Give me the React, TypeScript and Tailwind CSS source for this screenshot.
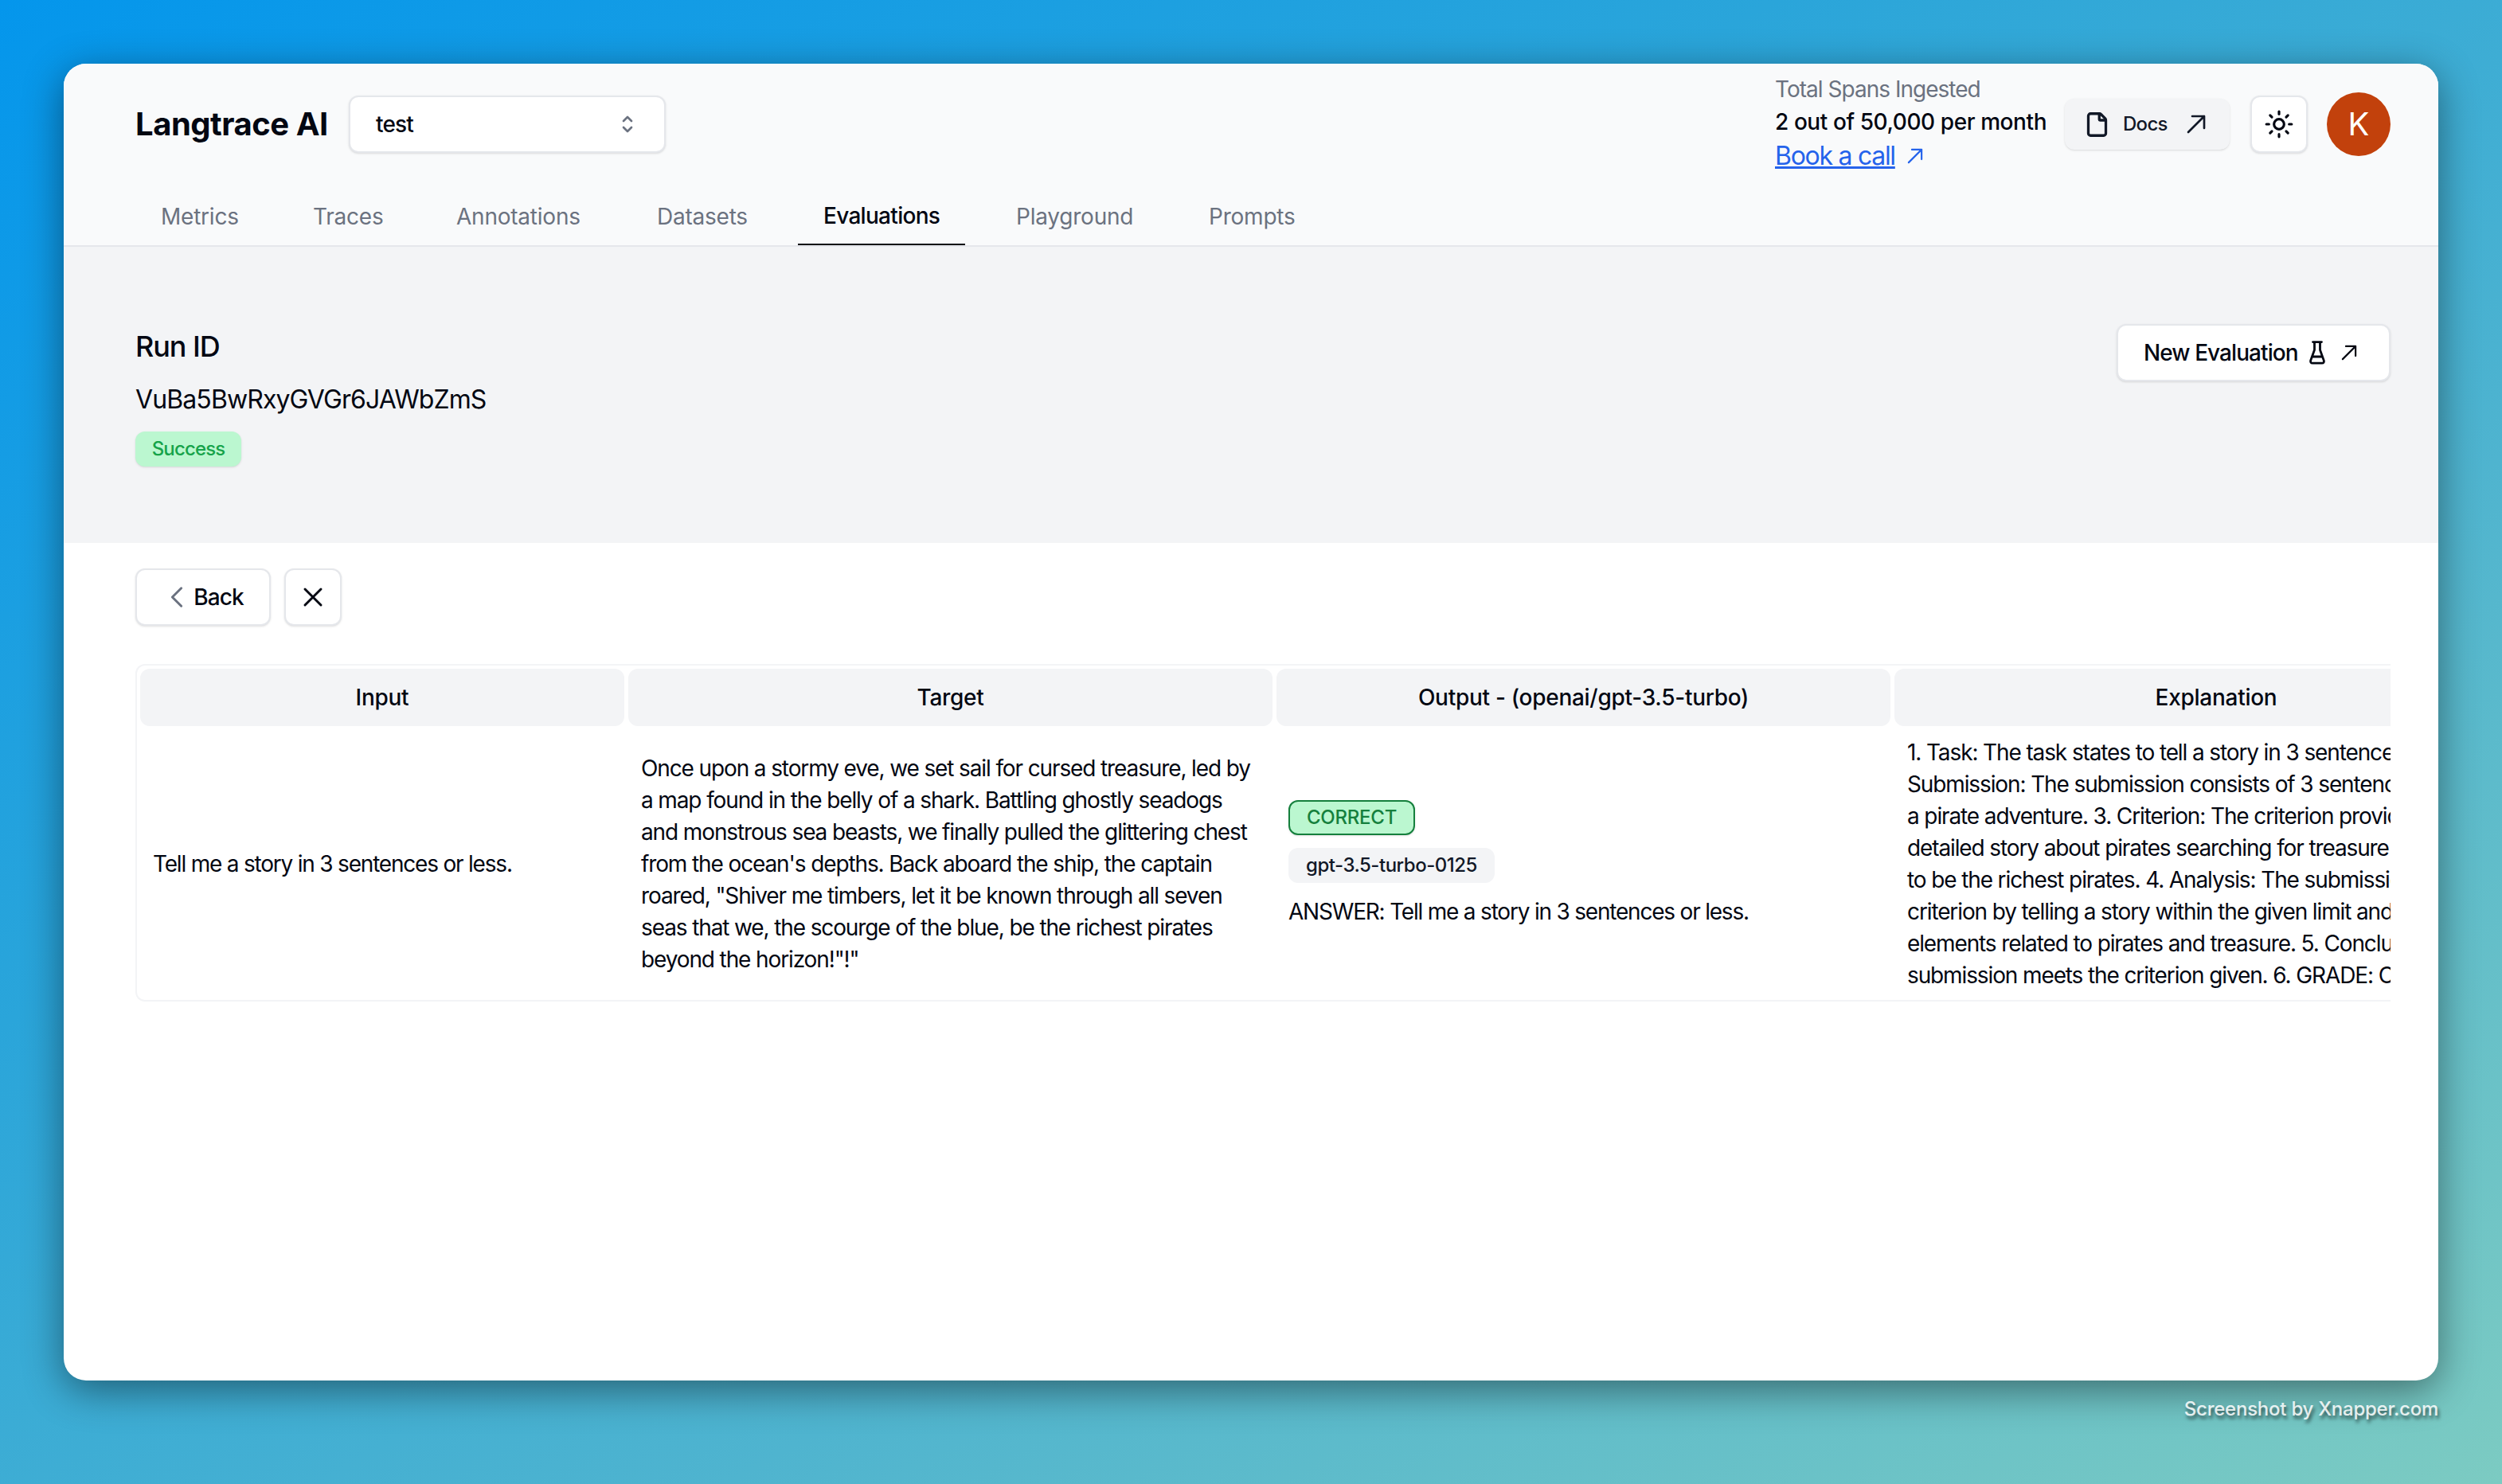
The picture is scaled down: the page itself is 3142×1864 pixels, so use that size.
import { File, Sun } from "lucide-react";

const tabs = [
  { label: "Metrics", w: "w-[159px]" },
  { label: "Traces", w: "w-[148px]" },
  { label: "Annotations", w: "w-[220px]" },
  { label: "Datasets", w: "w-[177px]" },
  { label: "Evaluations", w: "w-[210px]", active: true },
  { label: "Playground", w: "w-[210px]" },
  { label: "Prompts", w: "w-[200px]" },
];

const target = [
  "Once upon a stormy eve, we set sail for cursed treasure, led by",
  "a map found in the belly of a shark. Battling ghostly seadogs",
  "and monstrous sea beasts, we finally pulled the glittering chest",
  "from the ocean's depths. Back aboard the ship, the captain",
  'roared, "Shiver me timbers, let it be known through all seven',
  "seas that we, the scourge of the blue, be the richest pirates",
  'beyond the horizon!"!"',
];

const explanation = [
  "1. Task: The task states to tell a story in 3 sentences or less. 2.",
  "Submission: The submission consists of 3 sentences that tell",
  "a pirate adventure. 3. Criterion: The criterion provided is a",
  "detailed story about pirates searching for treasure and claiming",
  "to be the richest pirates. 4. Analysis: The submission meets the",
  "criterion by telling a story within the given limit and including",
  "elements related to pirates and treasure. 5. Conclusion: The",
  "submission meets the criterion given. 6. GRADE: CORRECT",
];

function Hero({ d, className, sw = 2 }: { d: string; className: string; sw?: number }) {
  return (
    <svg viewBox="0 0 24 24" fill="none" stroke="currentColor" strokeWidth={sw} strokeLinecap="round" strokeLinejoin="round" className={`shrink-0 ${className}`}>
      <path d={d} />
    </svg>
  );
}

const ARROW = "m4.5 19.5 15-15m0 0H8.25m11.25 0v11.25";
const UPDOWN = "M8.25 15 12 18.75 15.75 15m-7.5-6L12 5.25 15.75 9";
const LEFT = "M15.75 19.5 8.25 12l7.5-7.5";
const CROSS = "M6 18 18 6M6 6l12 12";

function Flask() {
  return (
    <svg viewBox="0 0 20 30" fill="none" stroke="currentColor" strokeWidth="2.8" strokeLinecap="round" strokeLinejoin="round" className="w-[20px] h-[30px] shrink-0 text-[#030712]">
      <path d="M4.5 1.6h11M6.5 1.6v10L1.8 24.6c-.7 2 .3 3.6 2.3 3.6h11.8c2 0 3-1.6 2.3-3.6L13.5 11.6v-10M4.2 20h11.6" />
    </svg>
  );
}

function HeadCell({ w, children }: { w: string; children: string }) {
  return (
    <div className={`${w} h-[72px] shrink-0 flex items-center justify-center bg-[#f3f4f6] rounded-[12px] text-[28px] font-medium text-[#030712] tracking-[-0.01em]`}>
      {children}
    </div>
  );
}

export default function App() {
  return (
    <div
      className="w-[3142px] h-[1864px] pl-[80px] pt-[80px] overflow-hidden bg-[linear-gradient(150deg,#0496ec_0%,#2aa5da_35%,#4fb4cf_65%,#7ccbc2_100%)]"
      style={{ fontFamily: "Inter, 'Liberation Sans', sans-serif" }}
    >
      <div className="w-[2982px] h-[1654px] rounded-[28px] bg-white overflow-hidden shadow-[0_12px_50px_rgba(0,0,0,0.45)] flex flex-col">
        {/* header */}
        <div className="h-[230px] shrink-0 bg-[#f9fafb] border-b-2 border-[#e5e7eb] flex flex-col">
          <div className="h-[154px] pl-[90px] pr-[60px] pt-[16px] flex items-start">
            <div className="flex items-center gap-[24px] h-[120px]">
              <span className="text-[40px] font-bold text-[#030712] tracking-[-0.012em] w-[244px] whitespace-nowrap">Langtrace AI</span>
              <div className="w-[398px] h-[72px] bg-white border-2 border-[#e5e7eb] rounded-[12px] shadow-sm flex items-center justify-between pl-[32px] pr-[30px]">
                <span className="text-[28px] font-medium text-[#030712] tracking-[-0.03em]">test</span>
                <Hero d={UPDOWN} className="w-[32px] h-[32px] text-[#6b7280]" />
              </div>
            </div>
            <div className="ml-auto flex items-center h-[120px]">
              <div className="flex flex-col w-[364px] text-[28px] tracking-[-0.035em]">
                <span className="h-[42px] leading-[42px] text-[#6b7280]">Total Spans Ingested</span>
                <span className="h-[40px] leading-[40px] text-[#030712] font-medium whitespace-nowrap tracking-[-0.015em]">2 out of 50,000 per month</span>
                <div className="h-[46px] mb-[2px] flex items-center gap-[12px] text-[#2563eb]">
                  <span className="underline text-[32px] tracking-[-0.04em]">Book a call</span>
                  <Hero d={ARROW} className="w-[26px] h-[26px]" />
                </div>
              </div>
              <div className="w-[207px] h-[64px] bg-[#f3f4f6] rounded-[12px] shadow-sm flex items-center pl-[24px] text-[#111827]">
                <File className="w-[33px] h-[33px] shrink-0" strokeWidth={2.4} />
                <span className="ml-[16px] text-[24px] font-medium tracking-[-0.03em]">Docs</span>
                <Hero d={ARROW} className="ml-[20px] w-[32px] h-[32px]" />
              </div>
              <div className="ml-[26px] w-[72px] h-[72px] bg-white border-2 border-[#e5e7eb] rounded-[12px] shadow-sm flex items-center justify-center">
                <Sun className="w-[38px] h-[38px] text-[#030712]" strokeWidth={2} />
              </div>
              <div className="ml-[24px] w-[80px] h-[80px] rounded-full bg-[#c2410c] flex items-center justify-center text-white text-[40px]">K</div>
            </div>
          </div>
          <div className="h-[74px] pl-[90px] flex gap-[32px]">
            {tabs.map((t) => (
              <div
                key={t.label}
                className={`${t.w} shrink-0 flex items-center pl-[32px] pt-[2px] text-[28px] whitespace-nowrap ${t.active ? "font-medium tracking-[-0.025em] text-[#030712] border-b-2 border-[#030712]" : "tracking-[-0.008em] text-[#6b7280]"}`}
              >
                {t.label}
              </div>
            ))}
          </div>
        </div>

        {/* run band */}
        <div className="h-[372px] shrink-0 bg-[#f3f4f6] px-[90px] pt-[96px] flex items-start justify-between">
          <div className="flex flex-col">
            <span className="h-[58px] leading-[58px] text-[36px] font-medium text-[#030712] tracking-[-0.03em]">Run ID</span>
            <span className="mt-[10px] h-[56px] leading-[56px] text-[32px] text-[#030712] tracking-[-0.028em]">VuBa5BwRxyGVGr6JAWbZmS</span>
            <span className="mt-[12px] w-[133px] h-[44px] rounded-[12px] bg-[#bbf7d0] text-[#16a34a] shadow-sm text-[24px] font-medium tracking-[-0.035em] flex items-center justify-center">Success</span>
          </div>
          <div className="w-[344px] h-[72px] mt-[1px] mr-[-30px] bg-white border-2 border-[#e5e7eb] rounded-[12px] shadow-sm flex items-center pl-[32px]">
            <span className="text-[28px] font-medium text-[#030712] tracking-[-0.033em] whitespace-nowrap">New Evaluation</span>
            <span className="ml-[14px] flex"><Flask /></span>
            <Hero d={ARROW} className="ml-[17px] w-[26px] h-[26px] text-[#030712]" />
          </div>
        </div>

        {/* body */}
        <div className="flex-1 pl-[90px] pr-[60px] pt-[32px]">
          <div className="flex gap-[17px]">
            <div className="w-[170px] h-[72px] bg-white border-2 border-[#e5e7eb] rounded-[12px] shadow-sm flex items-center justify-center gap-[3px]">
              <Hero d={LEFT} className="w-[36px] h-[36px] text-[#6b7280]" />
              <span className="text-[28px] font-medium text-[#030712] tracking-[-0.03em]">Back</span>
            </div>
            <div className="w-[72px] h-[72px] bg-white border-2 border-[#e5e7eb] rounded-[12px] shadow-sm flex items-center justify-center">
              <Hero d={CROSS} sw={1.8} className="w-[40px] h-[40px] text-[#030712]" />
            </div>
          </div>

          <div className="mt-[48px] h-[424px] w-[2832px] border-y-2 border-l-2 border-[#f3f4f6] rounded-l-[12px] overflow-hidden">
            <div className="w-[3400px] pl-[4px] pt-[4px] flex gap-[5px]">
              <HeadCell w="w-[608px]">Input</HeadCell>
              <HeadCell w="w-[809px]">Target</HeadCell>
              <HeadCell w="w-[771px]">Output - (openai/gpt-3.5-turbo)</HeadCell>
              <HeadCell w="w-[808px]">Explanation</HeadCell>
            </div>
            <div className="w-[3400px] h-[342px] pl-[4px] pt-[4px] flex gap-[5px] text-[28px] leading-[40px] text-[#030712] tracking-[-0.043em]">
              <div className="w-[608px] shrink-0 flex items-center pl-[16px]">Tell me a story in 3 sentences or less.</div>
              <div className="w-[809px] shrink-0 flex flex-col justify-center pl-[16px] tracking-[-0.04em]">
                {target.map((l) => (
                  <span key={l} className="whitespace-nowrap">{l}</span>
                ))}
              </div>
              <div className="w-[771px] shrink-0 flex flex-col justify-center items-start pl-[15px]">
                <span className="h-[44px] w-[159px] rounded-[12px] bg-[#bbf7d0] border-2 border-[#15803d] text-[#15803d] shadow-sm text-[24px] font-medium flex items-center justify-center tracking-[-0.01em]">CORRECT</span>
                <span className="mt-[16px] h-[44px] w-[259px] rounded-[12px] bg-[#f3f4f6] text-[#111827] text-[24px] font-medium flex items-center justify-center tracking-[-0.02em]">gpt-3.5-turbo-0125</span>
                <span className="mt-[16px] whitespace-nowrap">ANSWER: Tell me a story in 3 sentences or less.</span>
              </div>
              <div className="w-[808px] shrink-0 flex flex-col justify-center pl-[16px] tracking-[-0.04em]">
                {explanation.map((l) => (
                  <span key={l} className="whitespace-nowrap">{l}</span>
                ))}
              </div>
            </div>
          </div>
        </div>
      </div>
      <div className="w-[2982px] mt-[22px] text-right text-[24px] leading-[28px] font-medium tracking-[-0.01em] text-white/85 [text-shadow:2px_4px_4px_rgba(0,0,0,0.6)]">
        Screenshot by Xnapper.com
      </div>
    </div>
  );
}
